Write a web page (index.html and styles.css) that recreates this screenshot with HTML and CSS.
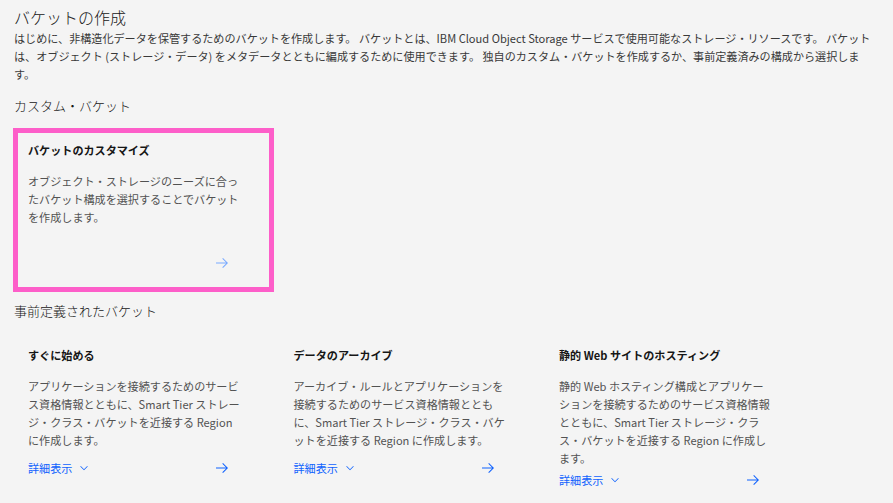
FILE: index.html
```html
<!DOCTYPE html>
<html lang="ja">
<head>
  <meta charset="UTF-8">
  <title>バケットの作成</title>
  <link rel="stylesheet" href="styles.css">
</head>
<body>

  <h1 class="titulo">バケットの作成</h1>
  <p class="descricao">はじめに、非構造化データを保管するためのバケットを作成します。 バケットとは、IBM Cloud Object Storage サービスで使用可能なストレージ・リソースです。 バケットは、オブジェクト (ストレージ・データ) をメタデータとともに編成するために使用できます。 独自のカスタム・バケットを作成するか、事前定義済みの構成から選択します。</p>

  <h2 class="secao">カスタム・バケット</h2>
  <div class="cartao cartaoCustom">
    <div class="cartaoTitulo">バケットのカスタマイズ</div>
    <p class="cartaoTexto">オブジェクト・ストレージのニーズに合ったバケット構成を選択することでバケットを作成します。</p>
    <div class="linhaLink fundo">
      <span></span>
      <svg class="seta claro" viewBox="0 0 32 32" width="16" height="16"><path d="M18 6L16.57 7.393 24.15 15 4 15 4 17 24.15 17 16.57 24.573 18 26 28 16 18 6z"/></svg>
    </div>
  </div>

  <h2 class="secao secaoPre">事前定義されたバケット</h2>
  <div class="grade">
    <div class="cartao">
      <div class="cartaoTitulo">すぐに始める</div>
      <p class="cartaoTexto">アプリケーションを接続するためのサービス資格情報とともに、Smart Tier ストレージ・クラス・バケットを近接する Region に作成します。</p>
      <div class="linhaLink">
        <a class="detalhes">詳細表示 <svg class="chevron" viewBox="0 0 32 32" width="12" height="12"><path d="M16 22L6 12l1.4-1.4L16 19.2l8.6-8.6L26 12z"/></svg></a>
        <svg class="seta" viewBox="0 0 32 32" width="16" height="16"><path d="M18 6L16.57 7.393 24.15 15 4 15 4 17 24.15 17 16.57 24.573 18 26 28 16 18 6z"/></svg>
      </div>
    </div>
    <div class="cartao">
      <div class="cartaoTitulo">データのアーカイブ</div>
      <p class="cartaoTexto">アーカイブ・ルールとアプリケーションを接続するためのサービス資格情報とともに、Smart Tier ストレージ・クラス・バケットを近接する Region に作成します。</p>
      <div class="linhaLink">
        <a class="detalhes">詳細表示 <svg class="chevron" viewBox="0 0 32 32" width="12" height="12"><path d="M16 22L6 12l1.4-1.4L16 19.2l8.6-8.6L26 12z"/></svg></a>
        <svg class="seta" viewBox="0 0 32 32" width="16" height="16"><path d="M18 6L16.57 7.393 24.15 15 4 15 4 17 24.15 17 16.57 24.573 18 26 28 16 18 6z"/></svg>
      </div>
    </div>
    <div class="cartao">
      <div class="cartaoTitulo">静的 Web サイトのホスティング</div>
      <p class="cartaoTexto">静的 Web ホスティング構成とアプリケーションを接続するためのサービス資格情報とともに、Smart Tier ストレージ・クラス・バケットを近接する Region に作成します。</p>
      <div class="linhaLink">
        <a class="detalhes">詳細表示 <svg class="chevron" viewBox="0 0 32 32" width="12" height="12"><path d="M16 22L6 12l1.4-1.4L16 19.2l8.6-8.6L26 12z"/></svg></a>
        <svg class="seta" viewBox="0 0 32 32" width="16" height="16"><path d="M18 6L16.57 7.393 24.15 15 4 15 4 17 24.15 17 16.57 24.573 18 26 28 16 18 6z"/></svg>
      </div>
    </div>
  </div>

</body>
</html>
```

FILE: styles.css
```css
body {
  font-family: "Noto Sans CJK JP", "Noto Sans", sans-serif;
  background: #f4f4f4;
  color: #161616;
  margin: 0;
  padding: 0 13px 0 14px;
}
.titulo {
  font-size: 16px;
  font-weight: 300;
  line-height: 15px;
  margin: 10px 0 0;
}
.descricao {
  font-size: 11.1px;
  line-height: 18px;
  color: #393939;
  margin: 3.5px 0 0;
}
.secao {
  font-size: 13px;
  font-weight: 300;
  line-height: 18px;
  margin: 14.5px 0 13px;
}
.secaoPre {
  margin: 10px 0 10px;
}
.cartao {
  box-sizing: border-box;
  padding: 16px 15px;
  display: flex;
  flex-direction: column;
}
.cartaoCustom {
  width: 261px;
  height: 164px;
  margin-left: -1px;
  border: 5px solid #fd5ec9;
  padding: 8px 10px 16px;
}
.cartaoTitulo {
  font-size: 11.1px;
  font-weight: 600;
  line-height: 18px;
}
.cartaoTexto {
  font-size: 11.1px;
  line-height: 18px;
  color: #525252;
  width: 213px;
  min-height: 78px;
  margin: 13px 0 0;
}
.cartaoCustom .cartaoTexto {
  min-height: 0;
}
.grade {
  display: grid;
  grid-template-columns: repeat(3, 261px);
  gap: 4.5px;
  margin-left: -1px;
}
.linhaLink {
  width: 202px;
  display: flex;
  justify-content: space-between;
  align-items: center;
  height: 18px;
  margin-top: 4px;
}
.linhaLink.fundo {
  margin-top: auto;
  height: 16px;
}
.detalhes {
  font-size: 11.1px;
  color: #0f62fe;
  display: flex;
  align-items: center;
  gap: 6px;
}
.chevron {
  fill: #0f62fe;
}
.seta {
  fill: #0f62fe;
}
.seta.claro {
  fill: #78a9ff;
}
```
